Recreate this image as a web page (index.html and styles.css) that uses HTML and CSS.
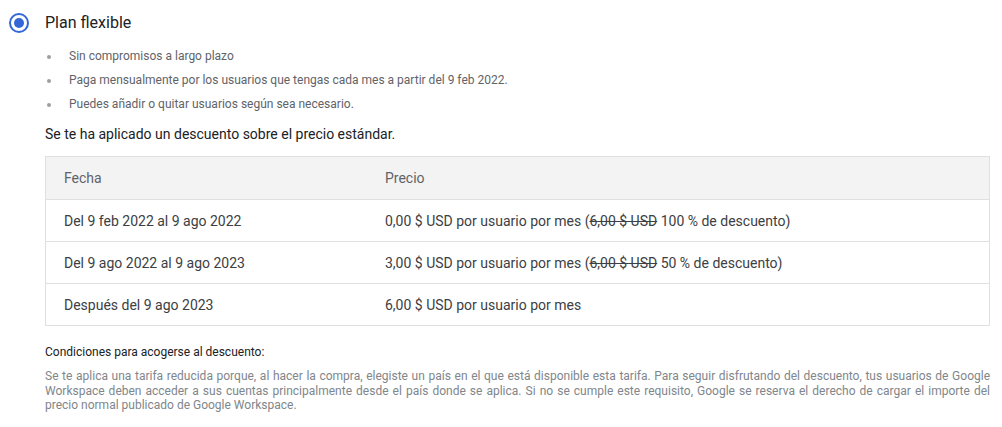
FILE: index.html
```html
<!DOCTYPE html>
<html lang="es">
<head>
  <meta charset="UTF-8" />
  <meta name="viewport" content="width=device-width, initial-scale=1.0"/>
  <title>Plan flexible</title>
  <link rel="stylesheet" href="styles.css">
</head>
<body>
  <div class="plan">
    <div class="plan-head">
      <span class="radio"><span class="radio-dot"></span></span>
      <h1 class="plan-title">Plan flexible</h1>
    </div>

    <div class="plan-body">
      <ul class="features">
        <li>Sin compromisos a largo plazo</li>
        <li>Paga mensualmente por los usuarios que tengas cada mes a partir del 9 feb 2022.</li>
        <li>Puedes añadir o quitar usuarios según sea necesario.</li>
      </ul>

      <p class="discount-note">Se te ha aplicado un descuento sobre el precio estándar.</p>

      <!-- Tabla de precios -->
      <div class="price-table">
        <div class="row head">
          <div class="cell">Fecha</div>
          <div class="cell">Precio</div>
        </div>
        <div class="row">
          <div class="cell">Del 9 feb 2022 al 9 ago 2022</div>
          <div class="cell">0,00 $ USD por usuario por mes (<s>6,00 $ USD</s> 100 % de descuento)</div>
        </div>
        <div class="row">
          <div class="cell">Del 9 ago 2022 al 9 ago 2023</div>
          <div class="cell">3,00 $ USD por usuario por mes (<s>6,00 $ USD</s> 50 % de descuento)</div>
        </div>
        <div class="row">
          <div class="cell">Después del 9 ago 2023</div>
          <div class="cell">6,00 $ USD por usuario por mes</div>
        </div>
      </div>

      <h2 class="terms-title">Condiciones para acogerse al descuento:</h2>
      <p class="terms">Se te aplica una tarifa reducida porque, al hacer la compra, elegiste un país en el que está disponible esta tarifa. Para seguir disfrutando del descuento, tus usuarios de Google Workspace deben acceder a sus cuentas principalmente desde el país donde se aplica. Si no se cumple este requisito, Google se reserva el derecho de cargar el importe del precio normal publicado de Google Workspace.</p>
    </div>
  </div>
</body>
</html>
```

FILE: styles.css
```css
* {
  margin: 0;
  padding: 0;
  box-sizing: border-box;
}
body {
  font-family: Roboto, 'Liberation Sans', sans-serif;
  color: #202124;
  background: #fff;
}
.plan {
  padding: 12px 12px 0 0;
}
.plan-head {
  display: flex;
  align-items: center;
  height: 22px;
}
.radio {
  width: 20px;
  height: 20px;
  margin-left: 9px;
  margin-right: 16px;
  border: 2px solid #3367d6;
  border-radius: 50%;
  display: flex;
  align-items: center;
  justify-content: center;
}
.radio-dot {
  width: 10px;
  height: 10px;
  border-radius: 50%;
  background: #3367d6;
}
.plan-title {
  font-size: 16px;
  font-weight: 400;
  line-height: 22px;
}
.plan-body {
  padding-left: 45px;
}

.features {
  list-style: none;
  margin-top: 11px;
}
.features li {
  position: relative;
  font-size: 12px;
  line-height: 15.75px;
  padding: 4px 0 4px 24px;
  color: #5f6368;
}
.features li::before {
  content: "";
  position: absolute;
  left: 2px;
  top: 10px;
  width: 4px;
  height: 4px;
  border-radius: 50%;
  background: #9aa0a6;
}

.discount-note {
  font-size: 14px;
  line-height: 20px;
  margin-top: 8px;
  color: #202124;
}

.price-table {
  margin-top: 12px;
  border: 1px solid #e0e0e0;
}
.row {
  display: grid;
  grid-template-columns: 321px 1fr;
  border-top: 1px solid #e0e0e0;
  height: 42px;
  align-items: center;
}
.row:first-child {
  border-top: none;
}
.row.head {
  background: #f3f3f3;
  color: #5f6368;
}
.cell {
  padding-left: 18px;
  font-size: 14px;
  line-height: 20px;
}
.row:not(.head) .cell {
  color: #3c4043;
}

.terms-title {
  font-size: 12px;
  font-weight: 400;
  line-height: 16px;
  margin-top: 18px;
  color: #202124;
}
.terms {
  font-size: 12px;
  line-height: 14.5px;
  margin-top: 9px;
  color: #80868b;
  text-align: justify;
}
```
